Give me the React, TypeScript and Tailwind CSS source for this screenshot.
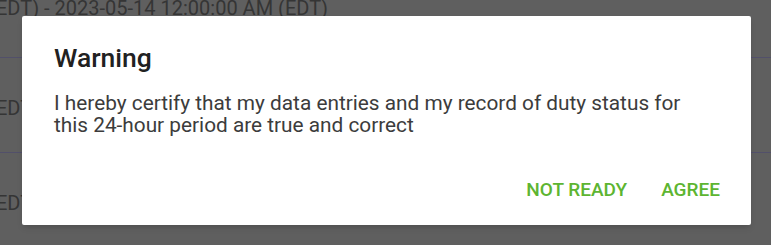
const rows = [
  { text: "EDT) - 2023-05-14 12:00:00 AM (EDT)", h: "h-[58px]", pad: "pt-0" },
  { text: "EDT) - 2023-05-15 12:00:00 AM (EDT)", h: "h-[95px]", pad: "pt-[42px]" },
  { text: "EDT) - 2023-05-16 12:00:00 AM (EDT)", h: "h-[95px]", pad: "pt-[42px]" },
];

function LogRow({ text, h, pad }: { text: string; h: string; pad: string }) {
  return (
    <div className={`flex items-start ${h} ${pad} border-b border-[#52506a] overflow-hidden`}>
      <span className="-ml-[4px] -mt-[4px] whitespace-nowrap text-[20px] leading-[24px] text-[#353535]">
        {text}
      </span>
    </div>
  );
}

export default function App() {
  return (
    <div
      className="relative h-[245px] w-[771px] overflow-hidden bg-[#5f5f5f]"
      style={{ fontFamily: "Roboto, 'Noto Sans', sans-serif" }}
    >
      <div className="flex flex-col">
        {rows.map((r, i) => (
          <LogRow key={i} {...r} />
        ))}
      </div>

      <div className="absolute left-[22px] top-[16px] flex h-[209px] w-[729px] flex-col rounded-[2px] bg-white pl-[32px] pr-[31px] pt-[27px] shadow-md">
        <h2 className="text-[26.5px] font-medium leading-[30px] text-[#212121]">Warning</h2>
        <p className="mt-[20px] text-[20.8px] leading-[21.5px] text-[#3c3c3c]">
          I hereby certify that my data entries and my record of duty status for
          <br />
          this 24-hour period are true and correct
        </p>
        <div className="mt-auto mb-[25px] flex justify-end gap-[34px] text-[19px] font-medium leading-[21px] text-[#5db531]">
          <button>NOT READY</button>
          <button>AGREE</button>
        </div>
      </div>
    </div>
  );
}
